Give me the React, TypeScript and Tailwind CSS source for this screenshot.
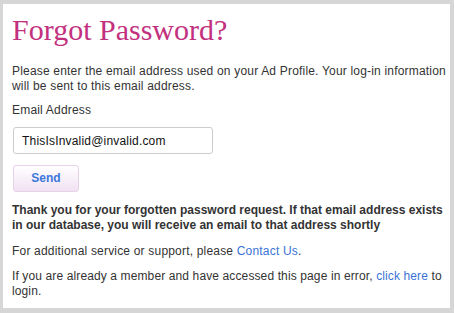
export default function App() {
  return (
    <div className="w-[454px] h-[313px] bg-[#d6d6d6]">
      <div className="h-[308px] ml-[3px] mr-[4px] pt-[4px]">
        <div className="h-full bg-white pl-[9px] pt-[9px] text-[12px] leading-[15px] text-[#333] font-['Liberation_Sans',Arial,sans-serif]">
          <h1 className="font-['Liberation_Serif','Times_New_Roman',serif] text-[30px] leading-[34px] text-[#c2307e]">
            Forgot Password?
          </h1>
          <p className="mt-[17px] tracking-[0.19px] pr-1">
            Please enter the email address used on your Ad Profile. Your log-in information will be sent to this email address.
          </p>
          <label className="block mt-[9px] tracking-[0.19px]">Email Address</label>
          <input
            type="text"
            defaultValue="ThisIsInvalid@invalid.com"
            className="block mt-[9px] ml-px w-[200px] h-[27px] px-[8px] border border-[#cccccc] rounded-[3px] text-[#111] tracking-[0.19px] outline-none"
          />
          <button className="block mt-[11px] ml-px w-[66px] h-[27px] rounded-[3px] border border-[#e6d3ea] bg-gradient-to-b from-white to-[#f1e1f2] font-bold text-[#3d78dc]">
            Send
          </button>
          <p className="mt-[11px] font-bold">
            Thank you for your forgotten password request. If that email address exists in our database, you will receive an email to that address shortly
          </p>
          <p className="mt-[11px] tracking-[0.19px]">
            For additional service or support, please <a className="text-[#3a73d8]">Contact Us</a>.
          </p>
          <p className="mt-[10px] tracking-[0.12px]">
            If you are already a member and have accessed this page in error, <a className="text-[#3a73d8]">click here</a> to login.
          </p>
        </div>
      </div>
    </div>
  );
}
